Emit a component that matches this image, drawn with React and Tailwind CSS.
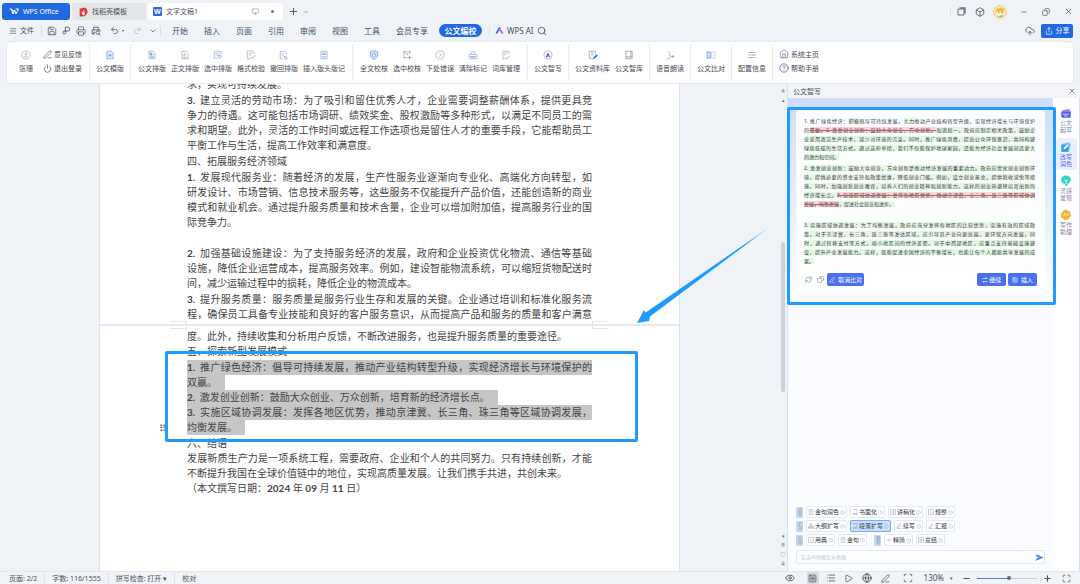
import React, { useState } from "react";
import {
  Box,
  ChevronDown,
  CircleHelp,
  CloudUpload,
  Copy,
  Eye,
  Globe,
  House,
  List,
  Maximize,
  Menu,
  Minus,
  Monitor,
  PenLine,
  Play,
  Plus,
  Power,
  Printer,
  Redo2,
  RefreshCw,
  Save,
  Scan,
  Search,
  Share,
  SquareMenu,
  Undo2,
  X,
} from "lucide-react";

const menus = ["开始", "插入", "页面", "引用", "审阅", "视图", "工具", "会员专享"];

// two-tone glyphs for the ribbon, 16x16 grid
const G = "#a9aeb8";
const B = "#6ea2ee";
const docShape = "M3 2h7l3 3v9H3z";
const glyphs = {
  user: (
    <>
      <circle cx="8" cy="8" r="6.5" stroke={G} />
      <circle cx="8" cy="6.5" r="2" stroke={G} />
      <path d="M4.5 12c1-2 6-2 7 0" stroke={G} />
    </>
  ),
  template: (
    <>
      <path d={docShape} stroke={B} fill="#e3efff" />
      <path d="M8 6v5M5.5 8.5h5" stroke={B} strokeWidth="1.6" />
    </>
  ),
  format: (
    <>
      <path d={docShape} stroke={G} />
      <path d="M5 5h3v3H5z" stroke={B} fill={B} />
      <path d="M9.5 7H11M5 10h6M5 12h6" stroke={B} />
    </>
  ),
  body: (
    <>
      <path d={docShape} stroke={G} />
      <path d="M5.5 9l2-4 2 4M6 8h3M5 11.5h6" stroke={G} />
    </>
  ),
  pick: (
    <>
      <path d="M7 13H2V2h11v5M4 5h7M4 8h3" stroke={G} />
      <path d="M8 8l6 2-2.5 1.5L10 14z" stroke={B} />
    </>
  ),
  check: (
    <>
      <path d="M8 14H2V1.5h9l2 2V6M4.5 5h6M4.5 8h4" stroke={G} />
      <path d="M8 11l2.5 2.5L15 8" stroke={G} strokeWidth="1.5" />
    </>
  ),
  revert: (
    <>
      <path d="M6 14H2V2h7l3 3v2M4.5 6h4M4.5 9h2" stroke={G} />
      <path d="M8 11h4a2 2 0 010 3.5H9M10 9l-2 2 2 2" stroke={B} />
    </>
  ),
  header: (
    <>
      <path d="M3 2h10v12H3z" stroke={G} />
      <path d="M5 5h6M5 7h6M5 11h6" stroke={B} strokeWidth="1.4" />
    </>
  ),
  shield: (
    <>
      <path d="M8 1l6 2v5c0 3.5-3 6-6 7-3-1-6-3.5-6-7V3z" stroke={B} fill="#cfe1fb" />
      <circle cx="8" cy="8" r="2.5" stroke={B} fill="#fff" />
    </>
  ),
  crop: (
    <>
      <path d="M1.5 3h13M3.5 1v13M12.5 1v6M1.5 12H8M5 6h4v3" stroke={G} strokeWidth="1.3" />
      <path d="M9 12h6M12 9v6" stroke={B} />
    </>
  ),
  next: (
    <>
      <circle cx="8" cy="8" r="6.5" stroke={G} />
      <path d="M7 5l3 3-3 3" stroke={B} />
    </>
  ),
  clear: (
    <>
      <path d="M2 7h12v7H2zM5 7V3h6v4" stroke={G} />
      <path d="M3 10.5h10M5 12.5h6" stroke={B} />
    </>
  ),
  dict: (
    <>
      <path d="M7 14H3V2h10v4M5 5h6M5 8h3" stroke={G} />
      <path d="M8 12l2 2 4-5" stroke={B} />
    </>
  ),
  smart: (
    <>
      <circle cx="8" cy="8" r="6.5" stroke="#9aa7f2" />
      <path d="M5 11l3-6 1 2-2 4z" fill="#3457dd" stroke="#3457dd" />
      <path d="M9.5 8l2 3h-2z" fill="#d44fd8" stroke="#d44fd8" />
    </>
  ),
  library: (
    <>
      <path d="M8 14H2V2h10v5M4.5 5h5M4.5 8h4" stroke="#8e9db5" />
      <path d="M9 14l.5-2.500L13.500 7.500l1.500 1.500-4 4z" stroke="#3478e5" fill="#3478e5" />
    </>
  ),
  book: <path d="M3 2h10v9H3zM3 11v3h10v-3M11 2v9" stroke="#8d939e" />,
  voice: (
    <>
      <path d="M5 2l4 3-3 3 3 1-1 5M3 14h4" stroke={G} />
      <path d="M10 10.5h5M12.500 8v5" stroke={B} />
    </>
  ),
  compare: (
    <>
      <path d="M1.5 3H7v10H1.500z" stroke={B} fill="#cfe2fb" />
      <path d="M9 3h5.500v10H9z" stroke="#b8cbe6" />
    </>
  ),
  config: (
    <>
      <path d="M2 4h12M2 8h12M2 12h12" stroke={G} />
      <path d="M6 3v2M10 7v2M6 11v2" stroke="#7b8290" />
    </>
  ),
};

const toolGroups = [
  { items: [["公文模版", "template"]] },
  {
    wide: true,
    items: [
      ["公文排版", "format"],
      ["正文排版", "body"],
      ["选中排版", "pick"],
      ["格式校验", "check"],
      ["撤回排版", "revert"],
      ["插入版头版记", "header"],
    ],
  },
  {
    wide: true,
    items: [
      ["全文校核", "shield"],
      ["选中校核", "crop"],
      ["下处错误", "next"],
      ["清除标记", "clear"],
      ["词库管理", "dict"],
    ],
  },
  { items: [["公文智写", "smart"]] },
  {
    items: [
      ["公文资料库", "library"],
      ["公文智库", "book"],
    ],
  },
  { items: [["语音朗读", "voice"]] },
  { items: [["公文比对", "compare"]] },
  { items: [["配置信息", "config"]] },
];

// each paragraph is a list of typeset lines
const pageOne = [
  ["求，实现可持续发展。"],
  [
    "3. 建立灵活的劳动市场：为了吸引和留住优秀人才，企业需要调整薪酬体系，提供更具竞",
    "争力的待遇。这可能包括市场调研、绩效奖金、股权激励等多种形式，以满足不同员工的需",
    "求和期望。此外，灵活的工作时间或远程工作选项也是留住人才的重要手段，它能帮助员工",
    "平衡工作与生活，提高工作效率和满意度。",
  ],
  ["四、拓展服务经济领域"],
  [
    "1. 发展现代服务业：随着经济的发展，生产性服务业逐渐向专业化、高端化方向转型，如",
    "研发设计、市场营销、信息技术服务等，这些服务不仅能提升产品价值，还能创造新的商业",
    "模式和就业机会。通过提升服务质量和技术含量，企业可以增加附加值，提高服务行业的国",
    "际竞争力。",
    "",
  ],
  [
    "2. 加强基础设施建设：为了支持服务经济的发展，政府和企业投资优化物流、通信等基础",
    "设施，降低企业运营成本，提高服务效率。例如，建设智能物流系统，可以缩短货物配送时",
    "间，减少运输过程中的损耗，降低企业的物流成本。",
  ],
  [
    "3. 提升服务质量：服务质量是服务行业生存和发展的关键。企业通过培训和标准化服务流",
    "程，确保员工具备专业技能和良好的客户服务意识，从而提高产品和服务的质量和客户满意",
  ],
];

const selection = [
  "1. 推广绿色经济：倡导可持续发展，推动产业结构转型升级，实现经济增长与环境保护的",
  "双赢。",
  "2. 激发创业创新：鼓励大众创业、万众创新，培育新的经济增长点。",
  "3. 实施区域协调发展：发挥各地区优势，推动京津冀、长三角、珠三角等区域协调发展，",
  "均衡发展。",
];

const closing = [
  "六、结语",
  "发展新质生产力是一项系统工程，需要政府、企业和个人的共同努力。只有持续创新，才能",
  "不断提升我国在全球价值链中的地位，实现高质量发展。让我们携手共进，共创未来。",
  "（本文撰写日期：2024 年 09 月 11 日）",
];

const FULL_LINE = 39;

const Line = ({ text, selected }) => {
  const full = text.length > FULL_LINE;
  const body = text.split(/(\d+\.?)/).map((part, i) =>
    i % 2 ? (
      <b key={i} className={part.endsWith(".") ? "mr-0.5" : ""}>{part}</b>
    ) : (
      part
    )
  );
  return (
    <div className={full ? "h-[15px] [text-align-last:justify]" : "h-[15px] whitespace-nowrap"}>
      {selected ? (
        <span className={full ? "block bg-[#c6c6c6]" : "inline-block bg-[#c6c6c6] pr-2"}>{body}</span>
      ) : (
        body
      )}
    </div>
  );
};

const Glyph = ({ name }) => (
  <svg viewBox="0 0 16 16" className="size-[10px]" fill="none" strokeWidth="1.2" aria-hidden="true">
    {glyphs[name]}
  </svg>
);

const Divider = () => <span className="h-[10px] w-px shrink-0 bg-[#dde1e7]" />;

const IconButton = ({ label, className = "", children }) => (
  <button type="button" aria-label={label} className={`flex shrink-0 items-center justify-center ${className}`}>
    {children}
  </button>
);

const TitleBar = () => (
  <header className="flex h-[22px] items-center pt-px pl-0.5 text-[7px] text-[#4a515d]">
    <button type="button" className="flex h-[17px] w-[68px] items-center gap-1 rounded-[3px] bg-[#2069e0] pl-[7px] text-white">
      <svg viewBox="0 0 20 14" className="h-[7px] w-[10px]" fill="none" stroke="#fff" strokeWidth="2">
        <path d="M1 2h4l3 10 3-7 3 7L19 2h-6M5 2l3 4h5" />
      </svg>
      WPS Office
    </button>
    <button type="button" className="ml-0.5 flex h-[17px] w-[74px] items-center gap-1 rounded-[3px] bg-[#e3e7e8] pl-[7px]">
      <svg viewBox="0 0 16 18" className="h-[10px] w-[9px]">
        <path d="M1 3l8-2c5 1 7 5 6 9s-4 7-8 7H1z" fill="#e5383d" />
        <path d="M5 11c0-3 3-2 4-6 2 2 0 4-1 5 3-1 4 2 1 4-2 1-4 0-4-3z" fill="#fff" />
      </svg>
      找稻壳模板
    </button>
    <div className="ml-0.5 flex h-[17px] w-[135px] items-center rounded-[3px] bg-white pr-[9px] pl-[5px]">
      <span className="flex size-[9px] items-center justify-center rounded-[1px] bg-[#3268e6] text-[7px] font-bold text-white">
        W
      </span>
      <span className="ml-1 flex-1">文字文稿1</span>
      <Monitor size={7} color="#8a909a" />
      <span className="ml-3 size-[3px] rounded-full bg-[#747a84]" />
    </div>
    <IconButton label="新建标签" className="ml-[5px]">
      <Plus size={11} />
    </IconButton>
    <IconButton label="标签列表" className="ml-1">
      <ChevronDown size={6} />
    </IconButton>
    <div className="ml-auto flex items-center pr-[7px]">
      <Divider />
      <IconButton label="窗口" className="ml-[6px]">
        <svg viewBox="0 0 18 18" className="size-[9px]" fill="none" stroke="#6b727d" strokeWidth="2">
          <path d="M2 4h12v12H2z" />
          <path d="M5 2h11v11" strokeWidth="3" />
        </svg>
      </IconButton>
      <IconButton label="应用" className="ml-[9px]">
        <Box size={10} />
      </IconButton>
      <IconButton label="账号" className="ml-2">
        <svg viewBox="0 0 26 26" className="size-[14px]">
          <circle cx="13" cy="13" r="12" fill="#fbe6ba" stroke="#f4c873" strokeWidth="1.5" />
          <path d="M6 12l1-7 4 2 3-3 2 3 4-2v9z" fill="#f3c81f" />
          <path d="M8 11h10v6c-1 4-8 4-10 0z" fill="#fff0df" />
          <path d="M7 12c3 0 5-1 7-3l5 4" stroke="#d69a1d" fill="none" strokeWidth="1.5" />
          <path d="M10 14h2M15 14h2" stroke="#5b473c" strokeWidth="1.5" />
          <path d="M8 20c3 3 8 3 11 0l-4-1-2 2z" fill="#79a68a" />
        </svg>
      </IconButton>
      <IconButton label="最小化" className="ml-[13px]">
        <Minus size={8} />
      </IconButton>
      <IconButton label="还原" className="ml-[14px]">
        <Copy size={8} className="-scale-x-100" />
      </IconButton>
      <IconButton label="关闭" className="ml-[14px]">
        <X size={9} />
      </IconButton>
    </div>
  </header>
);

const MenuBar = () => (
  <nav className="flex h-[17px] items-center pr-[7px] pl-[9px] text-[8px] text-[#4a515d]">
    <button type="button" className="flex w-[32px] items-center gap-[3px] text-[7px]">
      <Menu size={8} />
      文件
    </button>
    <Divider />
    <div className="ml-[5px] flex w-[113px] items-center gap-[5px]">
      <IconButton label="保存"><Save size={10} strokeWidth={1.7} /></IconButton>
      <IconButton label="输出">
        <svg viewBox="0 0 16 16" className="size-[9px]" fill="none" stroke="currentColor" strokeWidth="1.5">
          <path d="M6 10V2h4a4 3.5 0 010 7H4a2.5 2.5 0 102.5 2.5V9" />
        </svg>
      </IconButton>
      <IconButton label="打印"><Printer size={10} strokeWidth={1.7} /></IconButton>
      <IconButton label="打印预览">
        <svg viewBox="0 0 18 18" className="size-[10px]" fill="none" stroke="currentColor" strokeWidth="1.5">
          <path d="M5 7V2h8v5M5 14H2V7h14v3M5 16v-5h3" />
          <circle cx="12" cy="12" r="3" />
          <path d="M14 14l3 3" />
        </svg>
      </IconButton>
      <IconButton label="撤销" className="ml-1"><Undo2 size={9} /></IconButton>
      <span className="-ml-0.5 text-[4px]">▾</span>
      <IconButton label="恢复" className="ml-1"><Redo2 size={9} color="#b4b9c1" /></IconButton>
      <IconButton label="更多" className="ml-0.5"><ChevronDown size={8} /></IconButton>
    </div>
    <Divider />
    <div className="ml-[11px] flex items-center gap-4">
      {menus.map((name) => (
        <button type="button" key={name}>{name}</button>
      ))}
    </div>
    <button type="button" className="mr-[7px] ml-[11px] h-[13px] w-[43px] rounded-full bg-[#2069e0] text-[8px] font-bold text-white">
      公文编校
    </button>
    <Divider />
    <button type="button" className="ml-[5px] flex items-center gap-[3px]">
      <svg viewBox="0 0 18 14" className="h-[7px] w-[9px]">
        <path d="M1 13L7 2c1-2 3-2 4 0l1 3-3-1-4 9z" fill="#3455ee" />
        <path d="M8 6c3-1 5 0 7 3l2 4h-4z" fill="#ec45b4" />
      </svg>
      WPS AI
    </button>
    <IconButton label="搜索" className="ml-[3px]"><Search size={10} /></IconButton>
    <div className="ml-auto flex items-center gap-[6px]">
      <IconButton label="云同步"><CloudUpload size={10} /></IconButton>
      <button type="button" className="flex h-[14px] w-[32px] items-center justify-center gap-[3px] rounded-[2px] bg-[#2069e0] text-[7px] text-white">
        <Share size={8} />
        分享
      </button>
    </div>
  </nav>
);

const SmallTool = ({ icon, children }) => (
  <button type="button" className="flex h-[14px] items-center gap-0.5">
    {icon}
    {children}
  </button>
);

const Ribbon = () => (
  <div className="mx-[7px] mt-[3px] flex h-[41px] items-center rounded-[4px] bg-white text-[7px] whitespace-nowrap text-[#434954] shadow-[0_0_2px_#c9d0da]">
    <div className="flex h-[37px] w-[83px] border-r border-[#e8ebef] pl-3">
      <button type="button" className="flex w-[14px] flex-col items-center gap-[5px] pt-[6px]">
        <Glyph name="user" />
        张珊
      </button>
      <div className="ml-[10px] pt-[3px]">
        <SmallTool icon={<PenLine size={9} color="#5a6270" />}>意见反馈</SmallTool>
        <SmallTool icon={<Power size={9} color="#5a6270" />}>退出登录</SmallTool>
      </div>
    </div>
    {toolGroups.map((group) => (
      <div
        key={group.items[0][0]}
        className={`flex h-[37px] gap-[5px] border-r border-[#e8ebef] ${group.wide ? "px-[7px]" : "px-[6px]"}`}
      >
        {group.items.map(([label, icon]) => (
          <button type="button" key={label} className="flex flex-col items-center gap-[5px] pt-[6px]">
            <Glyph name={icon} />
            {label}
          </button>
        ))}
      </div>
    ))}
    <div className="h-[37px] pt-[3px] pl-[6px]">
      <SmallTool icon={<House size={10} color="#6d86b0" />}>系统主页</SmallTool>
      <SmallTool icon={<CircleHelp size={10} color="#55709e" />}>帮助手册</SmallTool>
    </div>
  </div>
);

const Document = () => (
  <article className="relative mx-auto flex w-[581px] flex-col border-x border-[#dfe4ea] bg-white font-['Lato','Noto_Sans_CJK_SC',sans-serif] text-[10px] leading-[15px] text-[#444]">
    <section className="flex h-[240px] flex-col justify-end gap-px overflow-hidden px-[87px] pb-0.5">
      {pageOne.map((lines, i) => (
        <div key={i} className="shrink-0">
          {lines.map((text, j) => (
            <Line key={j} text={text} />
          ))}
        </div>
      ))}
    </section>

    {/* page break with the margin corners */}
    <div className="relative h-[2px] bg-[#e6e9ee]">
      <span className="absolute -top-[3px] left-[70px] h-2 w-[17px] border border-l-0 border-[#e3e6ea]" />
      <span className="absolute -top-[3px] right-[70px] h-2 w-[17px] border border-r-0 border-[#e3e6ea]" />
    </div>

    <section className="flex flex-1 flex-col gap-px px-[87px] pt-[3px]">
      <div>
        <Line text="度。此外，持续收集和分析用户反馈，不断改进服务，也是提升服务质量的重要途径。" />
        <Line text="五、探索新型发展模式" />
      </div>
      <div className="relative">
        {selection.map((text) => (
          <Line key={text} text={text} selected />
        ))}
        <span className="absolute bottom-[2px] -left-[28px] text-[10px] leading-[10px] text-[#555]">⠿</span>
        <span className="absolute -top-[9px] -right-[46px] -bottom-[7px] -left-[22px] rounded-[2px] border-[3px] border-[#1f9bfd]" />
      </div>
      <div>
        {closing.map((text) => (
          <Line key={text} text={text} />
        ))}
      </div>
    </section>

    <svg viewBox="0 0 136 100" className="absolute top-[141px] left-[536px] h-[100px] w-[136px]">
      <defs>
        <linearGradient id="tail" x1="0" y1="1" x2="1" y2="0">
          <stop offset="0.8" stopColor="#1f9bfd" />
          <stop offset="1" stopColor="#1f9bfd" stopOpacity="0.2" />
        </linearGradient>
      </defs>
      <path d="M135 1L12 93l-3-5z" fill="url(#tail)" />
      <path d="M1 98L8 85l2 3 4 4-1 4z" fill="#1f9bfd" />
    </svg>
  </article>
);

const Scrollbar = () => (
  <div className="flex w-[8px] shrink-0 flex-col items-center text-[5px] leading-[9px] text-[#5f6570]">
    <span className="pt-[3px]">≛</span>
    <span>▴</span>
    <div className="flex w-full flex-1 flex-col items-center">
      <span className="flex-[138]" />
      <span className="w-[4px] flex-[150] rounded-full bg-[#cbd0d9]" />
      <span className="flex-[141]" />
    </div>
    <span>▾</span>
    <span>⇈</span>
    <span>○</span>
    <span className="pb-[3px]">⇊</span>
  </div>
);

const Ins = ({ children }) => <ins className="bg-[#e2f8e0] no-underline">{children}</ins>;
const Del = ({ children }) => <del className="bg-[#fcd6d4] decoration-[#b06a6a]">{children}</del>;

const DraftLine = ({ last, children }) => (
  <div className={last ? "h-[9px]" : "h-[9px] [text-align-last:justify]"}>{children}</div>
);

const Draft = () => (
  <div className="flex flex-col gap-0.5 pr-0.5 text-[5px] leading-[9px] text-[#3a414b]">
    <div>
      <DraftLine>
        1. 推广绿色经济：<Ins>积极</Ins>倡导可持续发展，<Ins>大力</Ins>推动产业结构转型升级，实现经济增长与环境保护
      </DraftLine>
      <DraftLine>
        的<Del>双赢。2. 激发创业创新：鼓励大众创业、万众创新。</Del>
        <Ins>和谐统一。政府应制定相关政策，鼓励企</Ins>
      </DraftLine>
      <DraftLine><Ins>业采用清洁生产技术，减少对环境的污染。同时，推广绿色消费，提高公众环保意识，共同构建</Ins></DraftLine>
      <DraftLine><Ins>绿色低碳的生活方式。通过这些举措，我们不仅能保护地球家园，还能为经济社会发展创造更大</Ins></DraftLine>
      <DraftLine last><Ins>的潜力和空间。</Ins></DraftLine>
    </div>
    <div>
      <DraftLine><Ins>2. 激发创业创新：鼓励大众创业，万众创新是推动经济发展的重要动力。政府应优化创业创新环</Ins></DraftLine>
      <DraftLine><Ins>境，提供必要的资金支持和政策优惠，降低创业门槛。例如，设立创业基金，提供税收减免等措</Ins></DraftLine>
      <DraftLine><Ins>施。同时，加强创新创业教育，培养人们的创业精神和创新能力。这样的创业热潮将培育出新的</Ins></DraftLine>
      <DraftLine>
        <Ins>经济增长点。</Ins>
        <Del>3. 实施区域协调发展：发挥各地区优势，推动京津冀、长三角、珠三角等区域协调</Del>
      </DraftLine>
      <DraftLine last>
        <Del>发展，均衡发展</Del>
        <Ins>，促进社会就业和进步。</Ins>
      </DraftLine>
    </div>
    <div className="pt-[10px]">
      <DraftLine><Ins>3. 实施区域协调发展：为了均衡发展，政府应充分发挥各地区的比较优势，实施有效的区域政</Ins></DraftLine>
      <DraftLine><Ins>策。对于京津冀、长三角、珠三角等发达区域，应引导其产业向更高端、更环保方向发展，同</Ins></DraftLine>
      <DraftLine><Ins>时，通过转移支付等方式，缩小地区间的经济差距。对于中西部地区，应重点支持基础设施建</Ins></DraftLine>
      <DraftLine><Ins>设，提升产业发展能力。这样，既能促进全国经济的平衡增长，也能让每个人都能共享发展的成</Ins></DraftLine>
      <DraftLine last><Ins>果。</Ins></DraftLine>
    </div>
  </div>
);

const PrimaryButton = ({ className = "", children }) => (
  <button type="button" className={`flex h-[13px] items-center justify-center gap-[3px] rounded-[2px] bg-[#4a6ff0] text-[6px] text-white ${className}`}>
    {children}
  </button>
);

const Tag = ({ children }) => (
  <span className="flex h-[11px] w-[7px] shrink-0 items-center justify-center rounded-[1px] bg-[#c8d8ec] text-[4px] leading-[5px] text-[#7f9bc4] [writing-mode:vertical-rl]">
    {children}
  </span>
);

const chipShapes = {
  page: "M2 1h8v10H2zM4 4h4M4 6h4M4 8h2",
  book: "M2 1h8v8H2v2h8V9",
  talk: "M1 1h10v10H1zM4 4h4v4H4z",
  tidy: "M1 1h10v10H1zM4 4l3 2-3 2M8 8h1",
  tree: "M5 1h2v3H5zM1 8h2v3H1zM5 8h2v3H5zM9 8h2v3H9zM6 4v4M2 8V6h8v2",
  pen: "M2 9l6-8 2 2-6 7H2zM2 11h9",
  cut: "M1 6h4M7 6h4M6 3v6",
};

const chipRows = [
  [["tag", "润色"], ["page", "金句润色"], ["book", "书面化"], ["talk", "讲稿化"], ["tidy", "规整"]],
  [["tag", "扩写"], ["tree", "大纲扩写"], ["book", "段落扩写"], ["pen", "续写"], ["pen", "汇报"]],
  [["tag", "引用"], ["tidy", "用典"], ["page", "金句"], ["tag", "精简"], ["cut", "精简"], ["talk", "总结"]],
];

const Chip = ({ shape, label, active, onClick }) => (
  <button
    type="button"
    onClick={onClick}
    className={`flex h-[12px] items-center gap-px rounded-[2px] border px-px text-[6px] whitespace-nowrap text-[#333a45] ${
      active ? "border-[#7aa9f5] bg-[#c9e0ff]" : "border-[#e1e9f5] bg-white"
    }`}
  >
    <svg viewBox="0 0 12 12" className="size-[6px]" fill="none" stroke="#8fa3c0">
      <path d={chipShapes[shape]} />
    </svg>
    {label}
    <CircleHelp size={5} color="#a8b6cc" />
  </button>
);

const sideTabs = [
  {
    label: ["公文", "起草"],
    icon: (
      <>
        <path d="M3 6l13-3v13H5z" fill="#8c8cf0" />
        <path d="M2 8h14l2-2v9c0 2-1 3-3 3H5c-2 0-3-1-3-3z" fill="#5963e8" />
        <path d="M5 12h9M7 15h5" stroke="#fff" strokeWidth="1.2" />
      </>
    ),
  },
  {
    label: ["改写", "润色"],
    icon: (
      <>
        <path d="M3 5l11-3 4 3-3 13H3z" fill="#6ccaf2" />
        <path d="M2 6h12v12H2z" fill="#3da0e4" />
        <path d="M6 14l1-3 5-5 2 2-5 5z" fill="#fff" />
      </>
    ),
  },
  {
    label: ["灵感", "发现"],
    icon: (
      <>
        <path d="M10 1c5 0 8 3 8 7 0 3-2 4-4 6l-4 5-2-4C4 14 2 12 2 8s3-7 8-7z" fill="#33d3bd" />
        <path d="M7 8l3 2 3-2M10 10v5" stroke="#fff" fill="none" strokeWidth="1.4" />
      </>
    ),
  },
  {
    label: ["写作", "助理"],
    icon: (
      <>
        <path d="M10 1l3 2 4 1v4l2 3-3 3-1 3-4 1-3 1-3-3-3-1V11L1 8l3-3 2-3z" fill="#f1b53b" />
        <path d="M6 12l2-5 2 5M7 10h2M13 7v5" stroke="#fff8df" fill="none" strokeWidth="1.3" />
      </>
    ),
  },
];

const SideTabs = () => {
  const [current, setCurrent] = useState(1);
  return (
    <div className="flex w-[27px] shrink-0 flex-col items-center gap-[2px] border-r border-[#d5e1f7] bg-white pt-[6px]">
      {sideTabs.map((tab, i) => (
        <button
          type="button"
          key={tab.label[0]}
          onClick={() => setCurrent(i)}
          className={`flex h-[32px] w-[21px] flex-col items-center rounded-[3px] pt-[3px] text-[6px] leading-[7px] ${
            i === current ? "bg-[#e9effd] text-[#4a6ff0]" : "text-[#7d86a0]"
          }`}
        >
          <svg viewBox="0 0 20 20" className="mb-px size-[12px]">{tab.icon}</svg>
          <span>{tab.label[0]}</span>
          <span>{tab.label[1]}</span>
        </button>
      ))}
    </div>
  );
};

const Assistant = () => {
  const [mode, setMode] = useState("段落扩写");
  return (
    <aside className="flex w-[293px] shrink-0 flex-col border-l border-[#d5e1f7]">
      <div className="flex h-[14px] items-center justify-between bg-[#f2f4f7] pr-1 pl-[5px] text-[7px] text-[#4a515d]">
        <h2>公文智写</h2>
        <IconButton label="关闭面板"><X size={8} /></IconButton>
      </div>
      <div className="flex min-h-0 flex-1">
        <div className="flex flex-1 flex-col bg-linear-to-b from-[#cfddfb] to-[#fafcff] to-40% px-2 pt-[12px] pb-[7px]">
          <div className="relative rounded-[3px] bg-white/90 px-2 pt-[7px] pb-[5px]">
            <Draft />
            <div className="mt-[7px] flex items-center">
              <IconButton label="重新生成" className="w-2"><RefreshCw size={7} color="#7b8494" /></IconButton>
              <IconButton label="复制" className="ml-1 w-2"><Copy size={7} color="#7b8494" className="-scale-x-100" /></IconButton>
              <PrimaryButton className="ml-[3px] w-[37px]"><PenLine size={6} />取消比对</PrimaryButton>
              <PrimaryButton className="ml-auto w-[29px]">⇌ 继续</PrimaryButton>
              <PrimaryButton className="ml-[2px] w-[29px]"><SquareMenu size={6} />插入</PrimaryButton>
            </div>
            <span className="pointer-events-none absolute -top-[3px] -right-[11px] -bottom-[14px] -left-[9px] rounded-[2px] border-[3px] border-[#1f9bfd]" />
          </div>

          <div className="mt-auto flex flex-col gap-[2px]">
            {chipRows.map((row, i) => (
              <div key={i} className="flex items-center gap-[3px]">
                {row.map(([shape, label], j) =>
                  shape === "tag" ? (
                    <span key={j} className={j ? "ml-1" : ""}><Tag>{label}</Tag></span>
                  ) : (
                    <Chip key={j} shape={shape} label={label} active={label === mode} onClick={() => setMode(label)} />
                  )
                )}
              </div>
            ))}
          </div>
          <form className="mt-1 flex h-[14px] items-center rounded-[2px] border border-[#dde8f8] bg-white pl-1">
            <input
              aria-label="修改要求"
              placeholder="告诉AI你想怎么修改"
              className="min-w-0 flex-1 text-[5px] outline-none placeholder:text-[#b5bac4]"
            />
            <IconButton label="发送">
              <svg viewBox="0 0 16 14" className="h-[7px] w-[9px]">
                <path d="M0 0l16 7-16 7 3-6 6-1-6-1z" fill="#3e83f6" />
              </svg>
            </IconButton>
          </form>
        </div>
        <SideTabs />
      </div>
    </aside>
  );
};

const StatusBar = () => {
  const [zoom, setZoom] = useState(53);
  return (
    <footer className="flex h-[13px] shrink-0 items-center border-t border-[#e3e7ec] bg-[#f0f3f7] px-[9px] text-[7px] whitespace-nowrap text-[#4a515d]">
      <div className="flex items-center gap-[7px]">
        <span>页面: 2/2</span>
        <Divider />
        <span>字数: 116/1555</span>
        <Divider />
        <button type="button">拼写检查: 打开 ▾</button>
        <Divider />
        <button type="button">校对</button>
      </div>
      <div className="ml-auto flex items-center">
        <IconButton label="护眼模式"><Eye size={10} /></IconButton>
        <span className="mx-[6px]"><Divider /></span>
        <IconButton label="页面视图" className="size-[12px] bg-[#d9dde3]"><SquareMenu size={9} /></IconButton>
        <IconButton label="大纲" className="ml-[7px]"><List size={10} /></IconButton>
        <IconButton label="阅读" className="ml-2"><Play size={9} /></IconButton>
        <IconButton label="网页视图" className="ml-[9px]"><Globe size={10} /></IconButton>
        <IconButton label="写作模式" className="ml-[9px]"><PenLine size={9} /></IconButton>
        <IconButton label="适应窗口" className="ml-[13px]"><Scan size={10} /></IconButton>
        <span className="ml-[11px] text-[8px]">130%</span>
        <span className="ml-[6px] text-[5px]">▾</span>
        <IconButton label="缩小" className="ml-[9px]"><Minus size={9} strokeWidth={3} /></IconButton>
        <input
          type="range"
          aria-label="缩放"
          value={zoom}
          onChange={(e) => setZoom(e.target.value)}
          className="ml-[6px] h-px w-[60px] appearance-none bg-linear-to-r from-[#4d7fd6] from-53% to-[#c9ced6] to-53% [&::-webkit-slider-thumb]:size-[4px] [&::-webkit-slider-thumb]:appearance-none [&::-webkit-slider-thumb]:rounded-full [&::-webkit-slider-thumb]:bg-[#5c6a88]"
        />
        <IconButton label="放大" className="ml-[6px]"><Plus size={9} strokeWidth={3} /></IconButton>
        <IconButton label="全屏" className="ml-[10px]"><Maximize size={9} /></IconButton>
      </div>
    </footer>
  );
};

const App = () => {
  return (
    <div className="flex h-screen flex-col overflow-hidden bg-[#eff3f7] font-['Noto_Sans','Noto_Sans_CJK_SC',sans-serif] leading-none">
      <TitleBar />
      <MenuBar />
      <Ribbon />
      <main className="flex min-h-0 flex-1 pt-px">
        <div className="flex min-w-0 flex-1 overflow-hidden">
          <Document />
        </div>
        <Scrollbar />
        <Assistant />
      </main>
      <StatusBar />
    </div>
  );
};

export default App;
